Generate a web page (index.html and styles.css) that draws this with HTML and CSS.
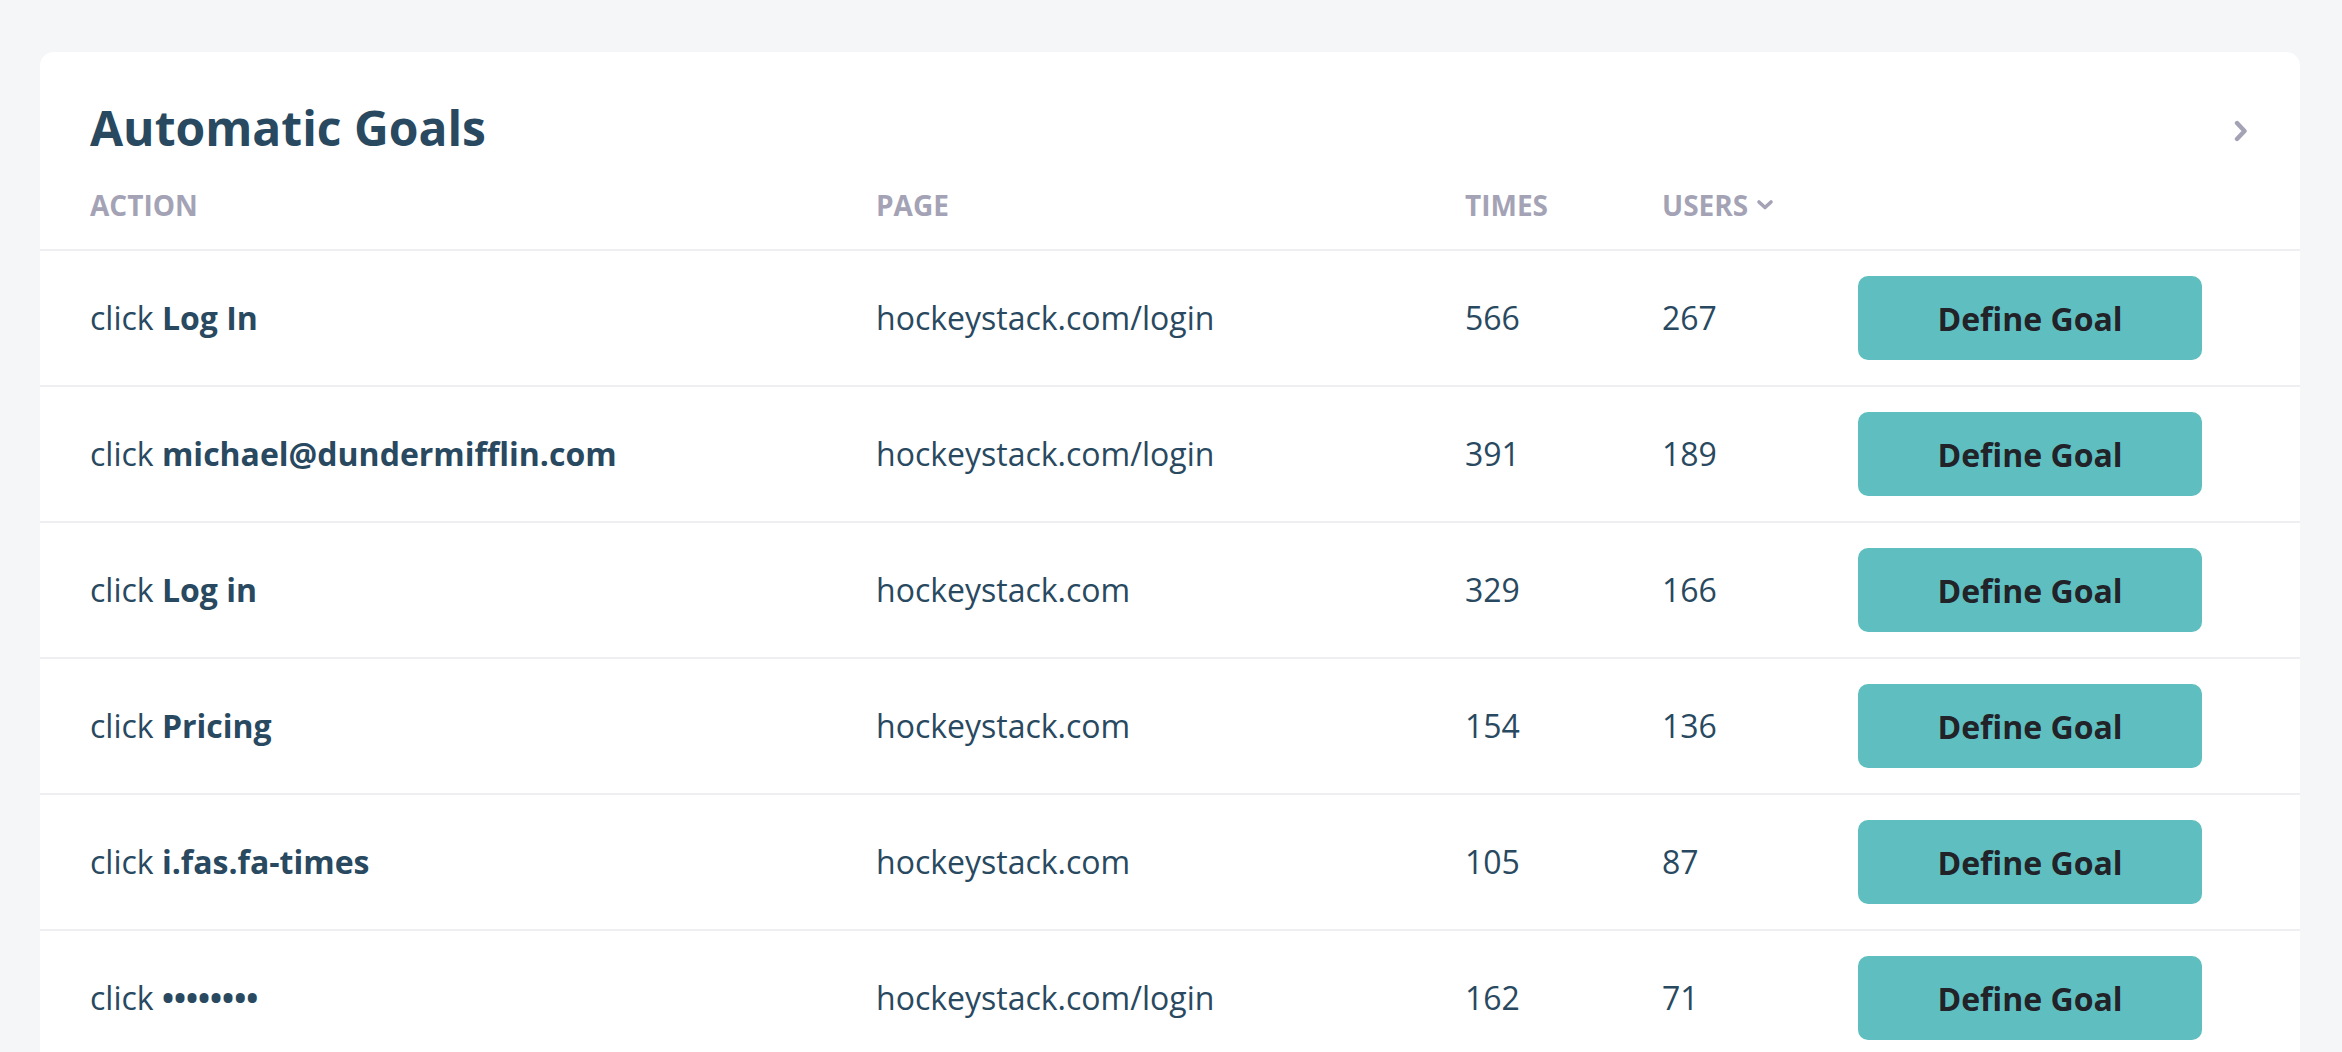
FILE: index.html
```html
<!DOCTYPE html>
<html lang="en">
<head>
<meta charset="utf-8">
<title>Automatic Goals</title>
<link rel="stylesheet" href="styles.css">
</head>
<body>
<main class="page">
  <section class="card">
    <header class="card-head">
      <h1 class="title">Automatic Goals</h1>
      <svg class="chev-right" width="14" height="22" viewBox="0 0 14 22" aria-hidden="true"><path d="M3 3 L10.5 11 L3 19" fill="none" stroke="#a4a3b6" stroke-width="4.4" stroke-linecap="round" stroke-linejoin="round"/></svg>
    </header>
    <div class="row head-row">
      <div class="th">ACTION</div>
      <div class="th">PAGE</div>
      <div class="th">TIMES</div>
      <div class="th">USERS <svg class="chev-down" width="18" height="12" viewBox="0 0 18 12" aria-hidden="true"><path d="M3 3 L9 8.5 L15 3" fill="none" stroke="#a4a3b6" stroke-width="3.6" stroke-linecap="round" stroke-linejoin="round"/></svg></div>
      <div></div>
    </div>
    <div class="row">
      <div class="td">click <b>Log In</b></div>
      <div class="td">hockeystack.com/login</div>
      <div class="td">566</div>
      <div class="td">267</div>
      <div><button class="btn">Define Goal</button></div>
    </div>
    <div class="row">
      <div class="td">click <b>michael@dundermifflin.com</b></div>
      <div class="td">hockeystack.com/login</div>
      <div class="td">391</div>
      <div class="td">189</div>
      <div><button class="btn">Define Goal</button></div>
    </div>
    <div class="row">
      <div class="td">click <b>Log in</b></div>
      <div class="td">hockeystack.com</div>
      <div class="td">329</div>
      <div class="td">166</div>
      <div><button class="btn">Define Goal</button></div>
    </div>
    <div class="row">
      <div class="td">click <b>Pricing</b></div>
      <div class="td">hockeystack.com</div>
      <div class="td">154</div>
      <div class="td">136</div>
      <div><button class="btn">Define Goal</button></div>
    </div>
    <div class="row">
      <div class="td">click <b>i.fas.fa-times</b></div>
      <div class="td">hockeystack.com</div>
      <div class="td">105</div>
      <div class="td">87</div>
      <div><button class="btn">Define Goal</button></div>
    </div>
    <div class="row">
      <div class="td">click <b>••••••••</b></div>
      <div class="td">hockeystack.com/login</div>
      <div class="td">162</div>
      <div class="td">71</div>
      <div><button class="btn">Define Goal</button></div>
    </div>
  </section>
</main>
</body>
</html>
```
FILE: styles.css
```css
html, body {
  margin: 0;
  padding: 0;
  background: #f5f6f8;
  font-family: "Open Sans", "Noto Sans", sans-serif;
  color: #28495f;
}

.page {
  box-sizing: border-box;
  height: 100vh;
  overflow: hidden;
  padding: 52px 42px 0 40px;
}

.card {
  background: #ffffff;
  border-radius: 14px 14px 0 0;
  min-height: 100%;
}

.card-head {
  display: flex;
  align-items: center;
  justify-content: space-between;
  padding: 43px 52px 0 50px;
}

.title {
  margin: 0;
  font-size: 48px;
  font-weight: 700;
  line-height: 65px;
  color: #28495f;
}

.chev-right {
  display: block;
  margin-top: 6px;
}

.row {
  display: grid;
  grid-template-columns: 786px 589px 197px 196px 344px;
  align-items: center;
  padding: 0 98px 0 50px;
  height: 134px;
  border-bottom: 2px solid #eeeef3;
}

.head-row {
  height: auto;
  padding-top: 26px;
  padding-bottom: 25px;
}

.th {
  display: flex;
  align-items: center;
  gap: 8px;
  font-size: 28px;
  font-weight: 700;
  line-height: 38px;
  color: #a4a3b6;
}

.chev-down {
  display: block;
}

.td {
  font-size: 32px;
  line-height: 44px;
  color: #28495f;
  white-space: nowrap;
}

.td b {
  font-weight: 700;
}

.btn {
  display: block;
  width: 344px;
  height: 84px;
  border: 0;
  border-radius: 10px;
  background: #5fbfc0;
  color: #212328;
  font-family: "Open Sans", "Noto Sans", sans-serif;
  font-size: 32px;
  font-weight: 700;
  cursor: pointer;
}
```
